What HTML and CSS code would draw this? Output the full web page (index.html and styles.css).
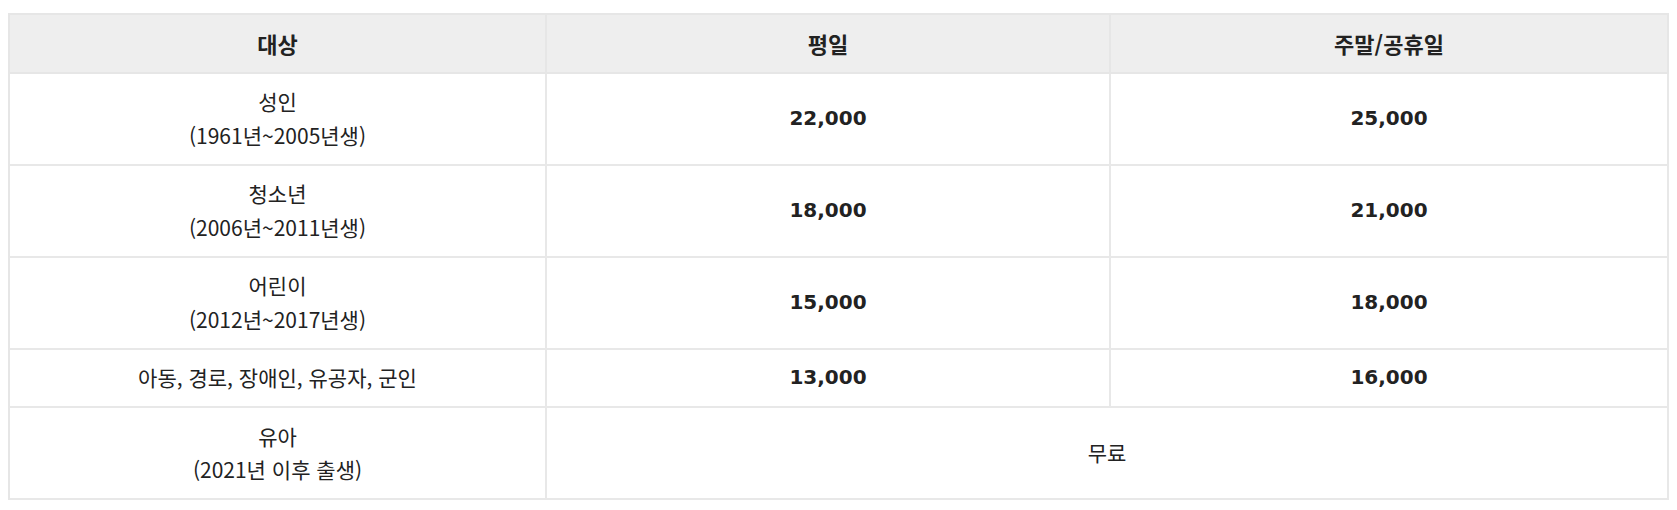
FILE: index.html
```html
<!DOCTYPE html>
<html lang="ko">
<head>
<meta charset="utf-8">
<title>요금 안내</title>
<link rel="stylesheet" href="styles.css">
</head>
<body>
<table class="price-table">
  <colgroup>
    <col class="col-target">
    <col class="col-weekday">
    <col class="col-weekend">
  </colgroup>
  <thead>
    <tr>
      <th>대상</th>
      <th>평일</th>
      <th>주말/공휴일</th>
    </tr>
  </thead>
  <tbody>
    <tr>
      <td>성인<br>(1961년~2005년생)</td>
      <td class="num">22,000</td>
      <td class="num">25,000</td>
    </tr>
    <tr>
      <td>청소년<br>(2006년~2011년생)</td>
      <td class="num">18,000</td>
      <td class="num">21,000</td>
    </tr>
    <tr>
      <td>어린이<br>(2012년~2017년생)</td>
      <td class="num">15,000</td>
      <td class="num">18,000</td>
    </tr>
    <tr>
      <td>아동, 경로, 장애인, 유공자, 군인</td>
      <td class="num">13,000</td>
      <td class="num">16,000</td>
    </tr>
    <tr>
      <td>유아<br>(2021년 이후 출생)</td>
      <td colspan="2">무료</td>
    </tr>
  </tbody>
</table>
</body>
</html>
```
FILE: styles.css
```css
html, body {
  background: #ffffff;
}
body {
  margin: 13px 8px 8px;
  font-family: "Noto Sans CJK KR", "Noto Sans", sans-serif;
  font-size: 21px;
  color: #222222;
}
.price-table {
  width: 1661px;
  table-layout: fixed;
  border-collapse: separate;
  border-spacing: 0;
  border-top: 2px solid #e6e6e6;
  border-left: 2px solid #e6e6e6;
}
.col-target { width: 537px; }
.col-weekday { width: 564px; }
.col-weekend { width: 558px; }
.price-table th,
.price-table td {
  padding: 11.5px 10px;
  line-height: 33.5px;
  text-align: center;
  vertical-align: middle;
  border-right: 2px solid #e8e8e8;
  border-bottom: 2px solid #e8e8e8;
  font-weight: 400;
}
.price-table th {
  background: #eeeeee;
  font-weight: 700;
  font-size: 22px;
  border-bottom-color: #e6e6e6;
  border-right-color: #e6e6e6;
}
.price-table td.num {
  font-family: "DejaVu Sans", "Noto Sans CJK KR", sans-serif;
  font-weight: 700;
  font-size: 20px;
}
```
